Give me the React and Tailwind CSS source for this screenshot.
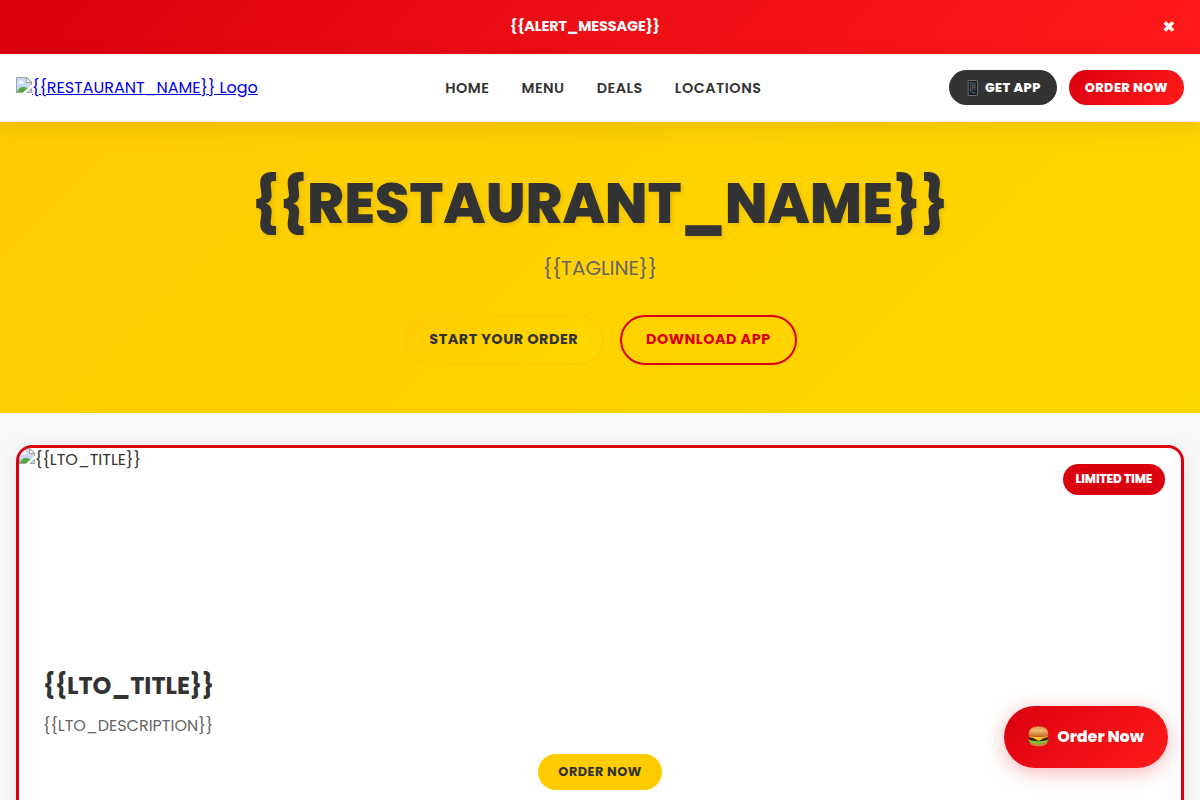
import React from 'react';

function BrokenImage({ className }) {
  return (
    <svg className={className} width="16" height="16" viewBox="0 0 16 16">
      <path d="M0.5 0.5H11L15.5 5V8L7 15.5H0.5Z" fill="#c6d8f6" />
      <path d="M2 6.5C2 5 3.5 5 3.8 4.6C4.5 3 6.500 3.500 6.800 4.800C8.500 4.800 8.500 6.500 7.500 6.500Z" fill="#fff" />
      <path d="M1 15C2 12 4 10 7 10C9 10 10.500 10.500 11.500 11.500L7.500 15Z" fill="#54a83a" />
      <path d="M16 8L7.500 16H9.500L16 10Z" fill="#fff" />
      <path d="M0.500 16V0.500H11L15.500 5V8M0.500 15.500H7" fill="none" stroke="#a3a3a3" />
      <path d="M10.500 0.500V5.500H15.500Z" fill="#fff" stroke="#a3a3a3" />
      <path d="M11 15.500H15.500V11.500Z" fill="#c6d8f6" stroke="#a3a3a3" />
    </svg>
  );
}

function PhoneIcon() {
  return (
    <svg className="mr-1 shrink-0" width="16" height="16" viewBox="0 0 16 16">
      <rect x="3.200" y="0.500" width="9.200" height="15" rx="0.700" fill="#141414" stroke="#707070" strokeWidth="1" />
      <rect x="4.500" y="2" width="6.600" height="11.800" fill="#172a33" />
      <path d="M5 3.200H6.400M9 5.200H10.400M7 7.200H8.400M5 11.200H6.400" stroke="#2f8f78" strokeWidth="1.300" />
      <path d="M7 3.200H8.400M5 7.200H6.400M9 9.200H10.400" stroke="#9b3d48" strokeWidth="1.300" />
      <path d="M9 3.200H10.400M5 5.200H6.400M7 9.200H8.400M9 12.700H10.400" stroke="#3465a0" strokeWidth="1.300" />
      <path d="M7 5.200H8.400M9 7.200H10.400M5 9.200H6.400M7 12.700H8.400" stroke="#8c7435" strokeWidth="1.300" />
    </svg>
  );
}

function BurgerIcon() {
  return (
    <svg className="shrink-0" width="21" height="22" viewBox="0 0 21 22">
      <defs>
        <linearGradient id="bun" x1="0" y1="0" x2="0" y2="1">
          <stop offset="0" stopColor="#d98a3d" />
          <stop offset="0.450" stopColor="#f0b066" />
          <stop offset="1" stopColor="#c36f28" />
        </linearGradient>
      </defs>
      <path d="M1.500 16C1.500 20 4.500 21.200 10.500 21.200S19.500 20 19.500 16Z" fill="#c98443" />
      <path d="M0.800 14.500C3 13.500 5 15 10.500 15S18 13.500 20.300 14.500C20.800 16.500 19 17 17.500 17.600C16 18.800 14 17.800 12.500 18.600C10 19.400 8 18.400 6.500 18.400C4 18.400 0.300 17 0.800 14.500Z" fill="#78c72c" />
      <path d="M1 12C1 10.800 20 10.800 20 12V14.200C18 16.800 3 16.800 1 14.200Z" fill="#43200f" />
      <path d="M1.200 10.500H19.800V12L15.500 13.200L10.500 16L6 13.300L1.200 12Z" fill="#ffc928" />
      <path d="M1 10H20V11.300C15 12.300 6 12.300 1 11.300Z" fill="#d94a28" />
      <path d="M0.700 9.500C0.700 4 4.500 1.200 10.500 1.200S20.300 4 20.300 9.500C20.300 12 0.700 12 0.700 9.500Z" fill="url(#bun)" />
      <path d="M6 4.200L6.800 3.900M10 3L10.900 3M14 4.300L14.800 4.600M8.500 5.800L9.300 5.700M12 5.900L12.700 6" stroke="#fbe0ae" strokeWidth="0.800" strokeLinecap="round" />
    </svg>
  );
}

const navItems = ['HOME', 'MENU', 'DEALS', 'LOCATIONS'];

function AlertBar() {
  return (
    <div className="flex h-[54px] shrink-0 items-center bg-linear-135 from-[#db0010] to-[#ff1a1a] px-4 text-white">
      <div className="flex-1 text-center text-[14.4px] font-bold tracking-[-0.08px]">{'{{ALERT_MESSAGE}}'}</div>
      <button className="w-[30px] text-center text-[21px] leading-7 font-bold" aria-label="Close">×</button>
    </div>
  );
}

function Header() {
  return (
    <header className="relative z-10 flex h-[68px] shrink-0 items-center justify-between border-b border-[#e9ecef] bg-white px-4 shadow-[0_4px_20px_rgba(0,0,0,0.1)]">
      <a className="flex items-center text-[16px] text-[#0000ee]" href="#home">
        <BrokenImage className="mb-[6px] shrink-0" />
        <span className="whitespace-nowrap underline">{'{{RESTAURANT_NAME}} Logo'}</span>
      </a>
      <nav className="flex gap-8 pt-[2px] text-[14.4px] font-semibold tracking-[0.5px]">
        {navItems.map((item) => (
          <a key={item} className="whitespace-nowrap" href="#nav">{item}</a>
        ))}
      </nav>
      <div className="flex gap-3 text-[12.8px] font-extrabold tracking-[0.42px] text-white">
        <button className="flex h-[35px] items-center rounded-full bg-[#333] px-4"><PhoneIcon />GET APP</button>
        <button className="h-[35px] rounded-full bg-linear-135 from-[#db0010] to-[#ff1a1a] px-4">ORDER NOW</button>
      </div>
    </header>
  );
}

function Hero() {
  return (
    <section className="flex h-[291px] shrink-0 flex-col items-center bg-linear-135 from-[#ffcc00] to-[#ffd700] pt-12">
      <h1 className="h-[62px] whitespace-nowrap text-[56px] leading-[68px] font-extrabold [text-shadow:2px_2px_4px_rgba(0,0,0,0.1)]">{'{{RESTAURANT_NAME}}'}</h1>
      <p className="mt-[22px] h-7 whitespace-nowrap text-[20px] leading-7 text-[#666]">{'{{TAGLINE}}'}</p>
      <div className="mt-[33px] flex gap-4 text-[14.4px] font-bold tracking-[0.5px]">
        <button className="h-[50px] rounded-full border-2 border-[#ffcc00] bg-linear-135 from-[#ffcc00] to-[#ffd700] px-6">START YOUR ORDER</button>
        <button className="h-[50px] rounded-full border-2 border-[#db0010] px-6 text-[#db0010]">DOWNLOAD APP</button>
      </div>
    </section>
  );
}

function Promotion() {
  return (
    <main className="px-4 pt-8">
      <article className="relative h-[480px] overflow-hidden rounded-2xl border-3 border-[#db0010] bg-white shadow-[0_4px_20px_rgba(0,0,0,0.1)]">
        <div className="flex h-[200px] items-start text-[16px]">
          <BrokenImage className="shrink-0" />
          <span>{'{{LTO_TITLE}}'}</span>
        </div>
        <span className="absolute top-4 right-4 flex h-[31px] items-center rounded-full bg-[#db0010] px-[12.8px] pb-px text-[12px] font-extrabold tracking-[-0.12px] text-white">LIMITED TIME</span>
        <div className="flex flex-col p-6">
          <h2 className="h-7 text-[24px] leading-7 font-bold">{'{{LTO_TITLE}}'}</h2>
          <p className="mt-[13px] h-[25px] text-[16px] leading-[26px] text-[#666]">{'{{LTO_DESCRIPTION}}'}</p>
          <button className="mt-4 h-9 self-center rounded-full bg-[#ffcc00] px-5 text-[12.8px] font-bold tracking-[0.5px]">ORDER NOW</button>
        </div>
      </article>
    </main>
  );
}

export default function App() {
  return (
    <div className="flex h-screen flex-col overflow-hidden bg-[#f8f9fa] font-[Poppins,Inter,sans-serif] text-[#333]">
      <AlertBar />
      <Header />
      <Hero />
      <Promotion />
      <button className="fixed right-8 bottom-8 flex h-[62px] w-[164px] items-center justify-center gap-2 rounded-full bg-linear-135 from-[#db0010] to-[#ff1a1a] text-white shadow-[0_4px_20px_rgba(219,0,16,0.3)]">
        <span className="pb-[3px]"><BurgerIcon /></span>
        <span className="whitespace-nowrap text-[16px] leading-6 font-extrabold tracking-[-0.08px]">Order Now</span>
      </button>
    </div>
  );
}
